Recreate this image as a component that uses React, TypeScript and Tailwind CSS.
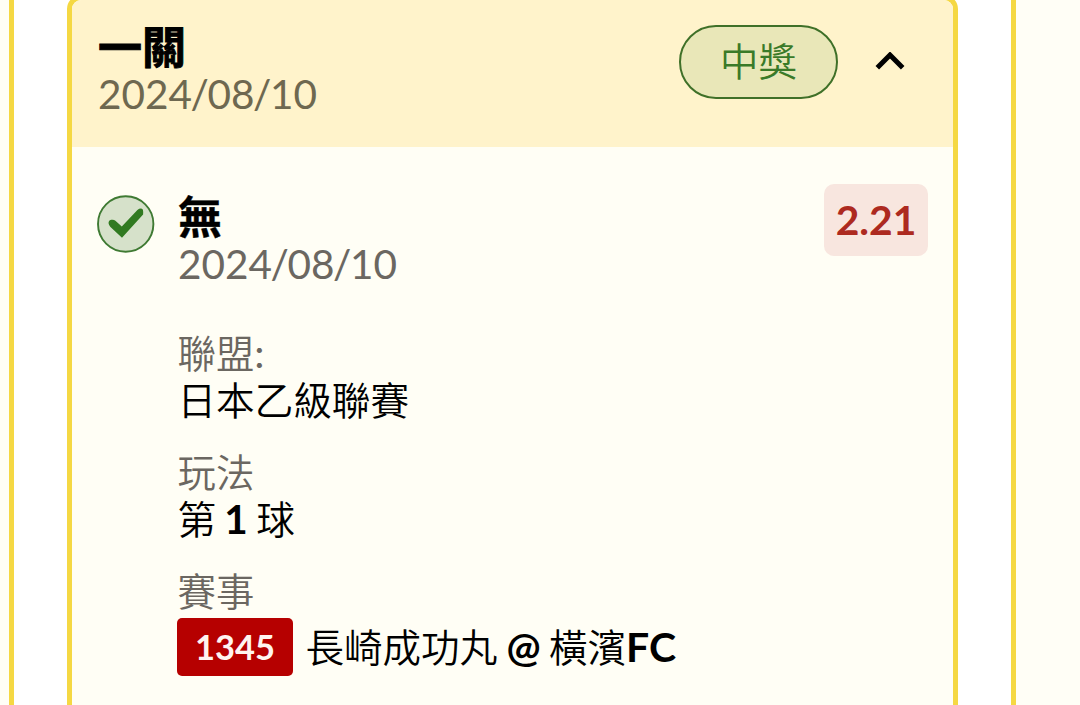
import type { ReactNode } from 'react'

interface FieldProps {
  label: ReactNode
  children: ReactNode
}

function Field({ label, children }: FieldProps) {
  return (
    <div className="h-[119px]">
      <div className="h-[46px] text-[38.4px] font-[350] leading-[46px] text-[#6b6761]">{label}</div>
      <div className="h-[48px] text-[38.6px] font-[350] leading-[48px] text-black">{children}</div>
    </div>
  )
}

function BetDate() {
  return (
    <>
      2024<span className="-mx-[1.4px]">/</span>08<span className="-mx-[1.4px]">/</span>10
    </>
  )
}

function CheckBadge() {
  return (
    <svg className="h-[58px] w-[58px] shrink-0" viewBox="0 0 58 58" fill="none">
      <circle cx="28.7" cy="29" r="27.7" fill="#d6e1ca" stroke="#3f7a33" strokeWidth="1.9" />
      <path
        d="M11.6 28.6 Q11.2 25.6 14.2 24.8 Q16.8 24.2 18.4 25.8 L24.8 31.4 L40.4 15 Q42.5 13.2 44.9 13.7 Q46.6 14.4 46.1 19.4 L25 42.8 L13.2 31.8 Q11.9 30.2 11.6 28.6 Z"
        fill="#317a21"
      />
    </svg>
  )
}

export default function App() {
  return (
    <div className="flex h-[705px] w-[1080px] overflow-hidden bg-[#fffef6] pl-[9px] font-['Lato','Noto_Sans_CJK_TC',sans-serif]">
      <div className="h-[760px] w-[1007px] shrink-0 border-x-[5px] border-[#f5d843] bg-white px-[53px]">
        <div className="-mt-[5px] h-[760px] w-[891px] overflow-hidden rounded-[14px] border-[5px] border-[#f5d843] bg-[#fffef5]">
          <div className="flex h-[147px] justify-between bg-[#fff3cb] pl-[26px] pr-[47px]">
            <div className="pt-[24px]">
              <div className="h-[47px] text-[44px] font-bold leading-[47px] text-black [-webkit-text-stroke:0.9px_black]">一關</div>
              <div className="h-[46px] text-[40.5px] leading-[46px] text-[#6e6850]">
                <BetDate />
              </div>
            </div>
            <div className="mt-[25px] flex h-[74px] items-center gap-[37px]">
              <div className="flex h-[74px] w-[159px] items-center justify-center rounded-full border-2 border-[#3f7028] bg-[#e9e7b8] pb-[2px] text-[38.4px] font-[350] leading-[48px] text-[#3a7a28]">
                中獎
              </div>
              <svg className="h-[20px] w-[31px]" viewBox="0 0 31 20" fill="none">
                <path d="M2.3 15.7 L15 3 L27.7 15.7" stroke="#000" strokeWidth="5" />
              </svg>
            </div>
          </div>
          <div className="flex pl-[25px] pr-[25px] pt-[37px]">
            <div className="pt-[11px]">
              <CheckBadge />
            </div>
            <div className="ml-[23px] flex-1 pt-[10px]">
              <div className="h-[47px] text-[44px] font-bold leading-[47px] text-black [-webkit-text-stroke:0.4px_black]">無</div>
              <div className="h-[46px] text-[40.5px] leading-[46px] text-[#6b6761]">
                <BetDate />
              </div>
            </div>
            <div className="flex h-[72px] w-[104px] items-center justify-center rounded-[10px] bg-[#f8e6df] text-[40.8px] font-bold text-[#ad2a20]">
              2.21
            </div>
          </div>
          <div className="pl-[105.5px] pt-[43px]">
            <Field
              label={
                <>
                  聯盟<span className="text-[41px] font-normal leading-none">:</span>
                </>
              }
            >
              日本乙級聯賽
            </Field>
            <Field label="玩法">
              <span className="[word-spacing:-2.2px]">
                第 <b className="text-[40.5px] leading-none">1</b> 球
              </span>
            </Field>
            <div className="h-[46px] text-[38.4px] font-[350] leading-[46px] text-[#6b6761]">賽事</div>
            <div className="flex items-center pt-[4px]">
              <span className="-ml-px flex h-[58px] w-[116px] items-center justify-center rounded-[5px] bg-[#b60000] pl-px text-[34.5px] font-bold text-[#fff4f0]">
                1345
              </span>
              <span className="ml-[13px] whitespace-nowrap text-[38.5px] font-[350] leading-[58px] text-black [word-spacing:-2px]">
                長崎成功丸 <b className="text-[40.5px]">@</b> 橫濱<b className="text-[41px]">FC</b>
              </span>
            </div>
          </div>
        </div>
      </div>
    </div>
  )
}
